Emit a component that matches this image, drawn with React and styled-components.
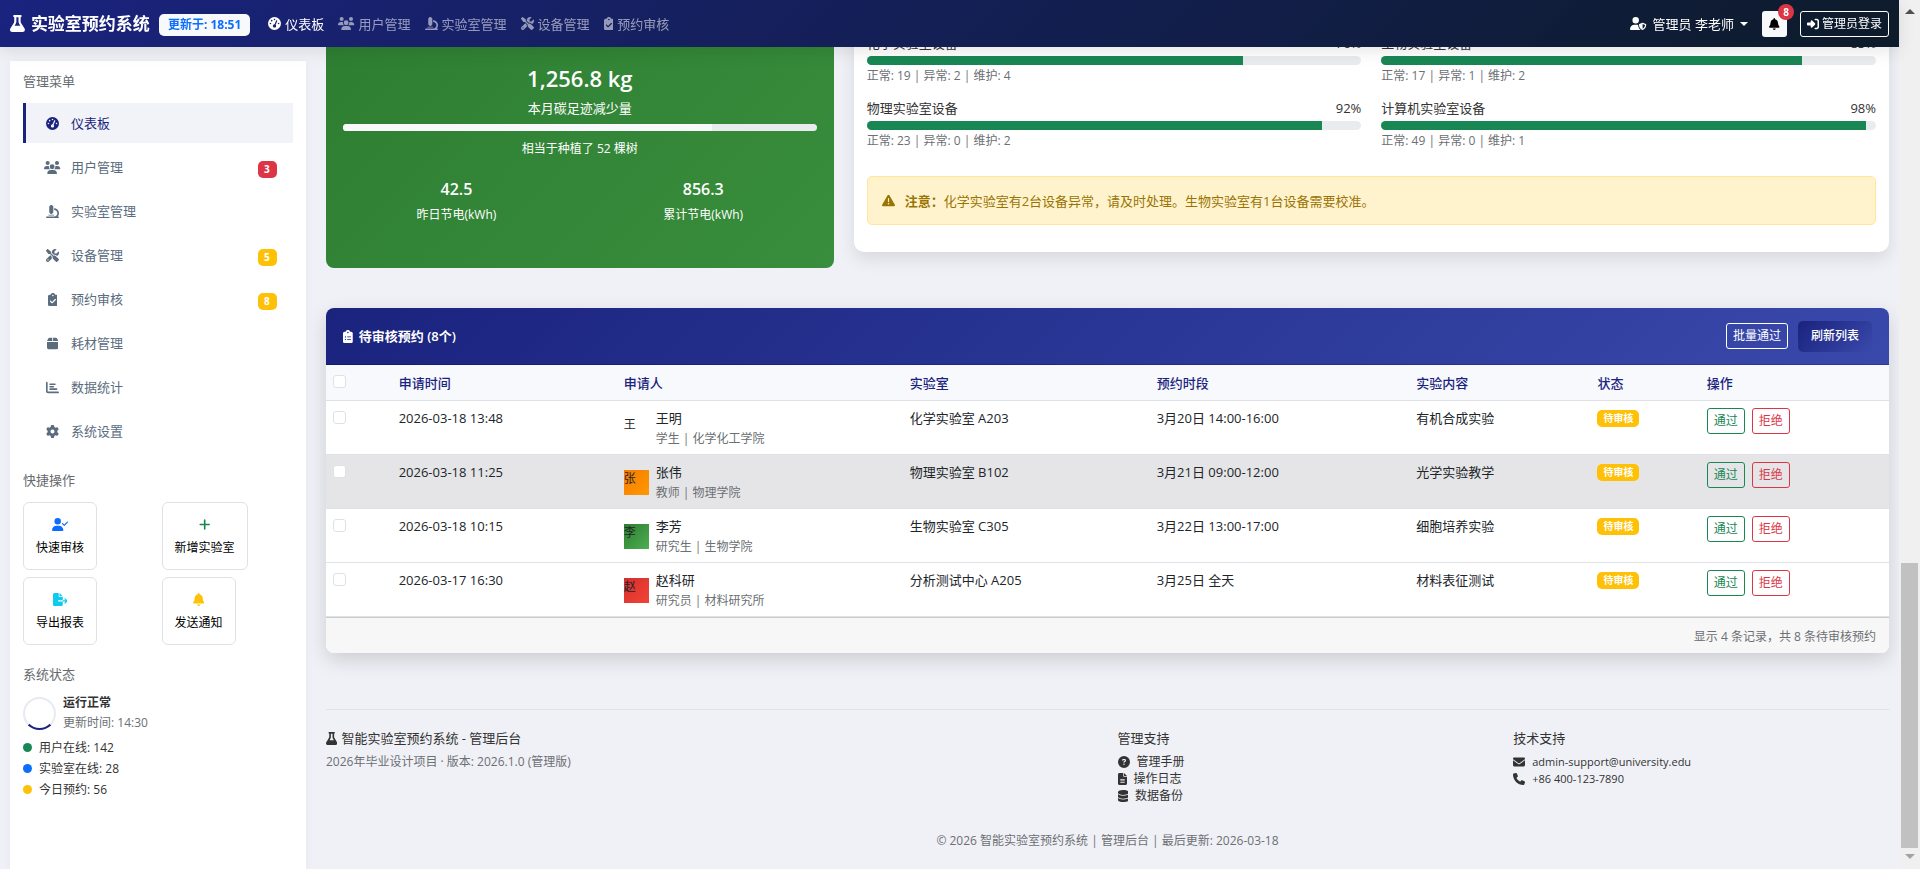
import React from "react";
import styled, { createGlobalStyle, css } from "styled-components";
import {
  FaFlask, FaGaugeHigh, FaUsers, FaMicroscope, FaScrewdriverWrench, FaClipboardCheck,
  FaBox, FaChartBar, FaGear, FaUserCheck, FaPlus, FaFileExport, FaBell,
  FaTriangleExclamation, FaClipboardList, FaUserShield, FaRightToBracket,
  FaCircleQuestion, FaFileLines, FaDatabase, FaEnvelope, FaPhone,
} from "react-icons/fa6";

/* The icons share one height; their width follows the width of each drawing. */
const GlobalStyle = createGlobalStyle`
  html { scrollbar-width: none; }
  *, *::before, *::after { box-sizing: border-box; }
  body {
    margin: 0;
    background: #f0f1f6;
    color: #333;
    font: 13px/20px "Open Sans", "Noto Sans CJK SC", sans-serif;
  }
  h1, h2, h3, p, ul { margin: 0; padding: 0; font-size: inherit; font-weight: inherit; }
  ul { list-style: none; }
  a { color: inherit; text-decoration: none; }
  button { font: inherit; cursor: pointer; margin: 0; }
  svg { width: 1em; height: 1em; flex: none; display: block; }
  svg[viewBox^="0 0 384"] { width: 0.75em; }
  svg[viewBox^="0 0 448"] { width: 0.875em; }
  svg[viewBox^="0 0 576"] { width: 1.125em; }
  svg[viewBox^="0 0 640"] { width: 1.25em; }
`;

const Shell = styled.div`
  display: grid;
  grid-template-columns: minmax(0, 1fr) 21px;
`;

const Columns = styled.div`
  display: grid;
  grid-template-columns: 316px minmax(0, 1fr);
`;

/* ---------- top bar ---------- */

const TopBar = styled.header`
  position: fixed;
  z-index: 10;
  top: 0;
  left: 0;
  right: 21px;
  height: 47px;
  padding: 0 10px;
  display: flex;
  align-items: center;
  background: linear-gradient(135deg, #1a237e 0%, #0d1b2a 100%);
  box-shadow: 0 4px 17px rgba(0, 0, 0, 0.1);
  color: #fff;
`;

const Brand = styled.a`
  display: flex;
  align-items: center;
  gap: 6px;
  margin-right: 9px;
  font-size: 17px;
  font-weight: 700;
`;

const UpdatedTag = styled.span`
  padding: 0 9px;
  margin-top: 2px;
  border-radius: 5px;
  background: #f8f9fa;
  color: #0d6efd;
  font-size: 12px;
  font-weight: 700;
  line-height: 22px;
`;

const TopNav = styled.nav`
  display: flex;
  flex: 1;
  gap: 14px;
  margin-left: 18px;
`;

const TopLink = styled.a`
  display: flex;
  align-items: center;
  gap: 4px;
  color: ${(p) => (p.$active ? "#fff" : "rgba(255, 255, 255, 0.55)")};
`;

const UserMenu = styled.button`
  display: flex;
  align-items: center;
  gap: 6px;
  padding: 0;
  margin-right: 14px;
  border: 0;
  background: none;
  color: #fff;
`;

const Caret = styled.span`
  border: 4px solid transparent;
  border-top-color: currentColor;
  border-bottom: 0;
`;

const BellButton = styled.button`
  position: relative;
  display: grid;
  place-items: center;
  width: 25px;
  height: 26px;
  margin-right: 13px;
  border: 0;
  border-radius: 3px;
  background: #f8f9fa;
  color: #000;
  font-size: 12px;
`;

const BellCount = styled.span`
  position: absolute;
  top: -7px;
  right: -7px;
  width: 16px;
  border-radius: 8px;
  background: #dc3545;
  color: #fff;
  font-size: 10px;
  font-weight: 700;
  line-height: 16px;
  text-align: center;
`;

const SmallButton = styled.button`
  display: inline-flex;
  align-items: center;
  gap: 3px;
  height: 26px;
  padding: 0 6px;
  border: 1px solid ${(p) => p.$color};
  border-radius: 3px;
  background: transparent;
  color: ${(p) => p.$color};
  font-size: 12px;
  line-height: 18px;
`;

/* ---------- sidebar ---------- */

const Sidebar = styled.aside`
  margin: 61px 10px 0;
  padding: 10px 13px;
  min-height: calc(100vh - 61px);
  background: #fff;
  box-shadow: 0 2px 8px rgba(0, 0, 0, 0.05);
`;

const SideTitle = styled.h2`
  color: #666a6e;
  section + section > & { margin-top: 19px; }
`;

const SideMenu = styled.ul`
  display: grid;
  gap: 4px;
  margin-top: 12px;
`;

const SideLink = styled.a`
  display: flex;
  align-items: center;
  height: 40px;
  padding: 0 16px 0 18px;
  border-left: 3px solid transparent;
  color: #5a6c7d;
  ${(p) => p.$active && css`
    border-left-color: #1a237e;
    background: #f1f3f8;
    color: #1a237e;
  `}
`;

const SideIcon = styled.span`
  display: grid;
  place-items: center;
  width: 17px;
  margin-right: 10px;
`;

const Badge = styled.span`
  padding: 0 6px;
  border-radius: 5px;
  background: ${(p) => p.$color};
  color: #fff;
  font-size: 10px;
  font-weight: 700;
  line-height: 17px;
`;

const SideBadge = styled(Badge)`
  min-width: 19px;
  margin: 4px 0 0 auto;
`;

const ActionGrid = styled.div`
  display: grid;
  grid-template-columns: 1fr 1fr;
  justify-items: start;
  gap: 7px;
  margin-top: 12px;
`;

const ActionButton = styled.button`
  display: flex;
  flex-direction: column;
  align-items: center;
  gap: 8px;
  height: 68px;
  padding: 15px 12px 0;
  border: 1px solid #dee2e6;
  border-radius: 6px;
  background: #fff;
  color: #000;
  font-size: 12px;
  line-height: 18px;
  svg { color: ${(p) => p.$color}; font-size: 13px; }
`;

const StatusRow = styled.div`
  display: flex;
  align-items: center;
  gap: 7px;
  margin-top: 9px;
  font-size: 12px;
`;

const Ring = styled.span`
  width: 33px;
  height: 33px;
  border: 2px solid #e8e9f3;
  border-bottom-color: #1a237e;
  border-radius: 50%;
`;

const StatusName = styled.strong`
  display: block;
  font-weight: 600;
`;

const Muted = styled.span`
  color: #6c6f73;
  font-size: 12px;
`;

const StatusList = styled.ul`
  margin-top: 4px;
  font-size: 12px;
  line-height: 21px;
`;

const StatusItem = styled.li`
  display: flex;
  align-items: center;
  gap: 7px;
  &::before {
    content: "";
    width: 9px;
    height: 9px;
    border-radius: 50%;
    background: ${(p) => p.$color};
  }
`;

/* ---------- main column ---------- */

const Main = styled.main`
  padding: 0 10px;
`;

const CardRow = styled.div`
  display: grid;
  grid-template-columns: minmax(0, 1fr) minmax(0, 2fr);
  align-items: start;
  margin: 0 -10px 40px;
  & > * { margin: 0 10px; }
`;

const EnergyCard = styled.section`
  padding: 64px 17px 44px;
  border-radius: 0 0 8px 8px;
  background: linear-gradient(135deg, #2e7d32 0%, #388e3c 100%);
  color: #fff;
  text-align: center;
`;

const BigNumber = styled.h2`
  font-size: 22px;
  font-weight: 600;
  line-height: 28px;
  margin-bottom: 6px;
`;

const Track = styled.div`
  overflow: hidden;
  height: ${(p) => p.$height};
  border-radius: 5px;
  background: #e9ecef;
`;

const Fill = styled.div`
  height: 100%;
  background: ${(p) => p.$color};
`;

const EnergyBar = styled.div`
  margin: 6px 0 9px;
`;

const EnergyNote = styled.p`
  font-size: 12px;
  line-height: 18px;
`;

const EnergyPair = styled.div`
  display: grid;
  grid-template-columns: 1fr 1fr;
  margin: 21px -10px 0;
`;

const EnergyValue = styled.h3`
  font-size: 16px;
  font-weight: 600;
  margin-bottom: 7px;
`;

const EquipmentCard = styled.section`
  padding: 33px 13px 27px;
  border-radius: 0 0 10px 10px;
  background: #fff;
  box-shadow: 0 7px 17px rgba(0, 0, 0, 0.1);
`;

const EquipmentGrid = styled.div`
  display: grid;
  grid-template-columns: 1fr 1fr;
  gap: 13px 20px;
`;

const EquipmentHead = styled.div`
  display: flex;
  justify-content: space-between;
  margin-bottom: 3px;
`;

const EquipmentStats = styled.p`
  margin-top: 2px;
  color: #6c6f73;
  font-size: 12px;
  line-height: 18px;
`;

const Alert = styled.div`
  display: flex;
  align-items: center;
  gap: 10px;
  height: 49px;
  margin-top: 26px;
  padding: 0 14px;
  border: 1px solid #ffe69c;
  border-radius: 5px;
  background: #fff3cd;
  color: #997404;
`;

/* ---------- pending table ---------- */

const TableCard = styled.section`
  border-radius: 8px;
  background: #fff;
  box-shadow: 0 7px 20px rgba(0, 0, 0, 0.15);
  overflow: hidden;
`;

const TableHead = styled.header`
  display: flex;
  align-items: center;
  height: 57px;
  padding: 0 17px;
  background: linear-gradient(135deg, #1a237e 0%, #3949ab 100%);
  border-bottom: 1px solid rgba(0, 0, 0, 0.18);
  color: #fff;
`;

const TableTitle = styled.h2`
  display: flex;
  align-items: center;
  gap: 6px;
  flex: 1;
  font-weight: 600;
`;

const RefreshButton = styled.button`
  height: 31px;
  margin-left: 10px;
  padding: 0 13px;
  border: 0;
  border-radius: 5px;
  background: linear-gradient(135deg, #1a237e 0%, #3949ab 100%);
  color: #fff;
  font-size: 12px;
  font-weight: 500;
`;

const Table = styled.table`
  width: 100%;
  table-layout: fixed;
  border-collapse: separate;
  border-spacing: 0;
  text-align: left;
`;

const Th = styled.th`
  padding: 8px 7px 7px;
  border-bottom: 1px solid #dee2e6;
  background: #f8f9fc;
  color: #1a237e;
  font-weight: 500;
`;

const Td = styled.td`
  padding: 7px 7px 5px;
  border-bottom: 1px solid #dee2e6;
  background: ${(p) => (p.$hover ? "#e5e5e7" : "#fff")};
  color: #212529;
  vertical-align: top;
`;

const Check = styled.input`
  appearance: none;
  display: block;
  width: 13px;
  height: 13px;
  margin: 3px 0 0;
  border: 1px solid #dee2e6;
  border-radius: 3px;
  background: #fff;
  th & { margin: 0 0 3px; }
`;

const Person = styled.div`
  display: flex;
  align-items: center;
  gap: 7px;
`;

const Avatar = styled.span`
  width: 25px;
  height: 25px;
  background: ${(p) => p.$fill};
  font-size: 12px;
  line-height: 17px;
`;

const PersonInfo = styled.div`
  display: grid;
  gap: 1px;
`;

const RowBadge = styled(Badge)`
  display: block;
  width: max-content;
  margin-top: 2px;
`;

const RowActions = styled.div`
  display: flex;
  gap: 7px;
`;

const TableFoot = styled.footer`
  height: 36px;
  padding: 0 13px;
  border-top: 1px solid #ccc;
  background: #f7f7f7;
  color: #6c6f73;
  font-size: 12px;
  line-height: 37px;
  text-align: right;
`;

/* ---------- page footer ---------- */

const PageFooter = styled.footer`
  margin-top: 56px;
  padding: 18px 0 19px;
  border-top: 1px solid #dee2e6;
`;

const FooterColumns = styled.div`
  display: grid;
  grid-template-columns: 2fr 1fr 1fr;
  margin: 0 -10px;
  & > * { padding: 0 10px; }
`;

const FooterTitle = styled.h2`
  display: flex;
  align-items: center;
  gap: 4px;
  margin-bottom: 5px;
`;

const FooterNote = styled(Muted)`
  display: block;
  line-height: 17px;
`;

const FooterLink = styled.a`
  display: flex;
  align-items: center;
  gap: 7px;
  font-size: 12px;
  line-height: 17px;
`;

const ContactText = styled.span`
  font-size: 11px;
`;

const Copyright = styled.p`
  margin-top: 28px;
  color: #6c6f73;
  font-size: 12px;
  line-height: 18px;
  text-align: center;
`;

/* ---------- scroll rail ---------- */

const Rail = styled.div`
  position: sticky;
  top: 0;
  display: flex;
  flex-direction: column;
  align-items: center;
  height: 100vh;
  padding: 9px 0 10px;
  background: #f0f0f0;
`;

const RailArrow = styled.span`
  border: 5px solid transparent;
  ${(p) => (p.$up
    ? "border-top: 0; border-bottom-color: #505050;"
    : "border-bottom: 0; border-top-color: #a3a3a3;")}
`;

const RailTrack = styled.div`
  display: flex;
  align-items: flex-end;
  flex: 1;
  width: 17px;
  margin: 7px 0 6px;
`;

const RailThumb = styled.div`
  width: 100%;
  height: 34.5%;
  background: #c1c1c1;
`;

const topLinks = [
  [FaGaugeHigh, "仪表板"],
  [FaUsers, "用户管理"],
  [FaMicroscope, "实验室管理"],
  [FaScrewdriverWrench, "设备管理"],
  [FaClipboardCheck, "预约审核"],
];

const sideLinks = [
  [FaGaugeHigh, "仪表板"],
  [FaUsers, "用户管理", "3", "#dc3545"],
  [FaMicroscope, "实验室管理"],
  [FaScrewdriverWrench, "设备管理", "5", "#ffc107"],
  [FaClipboardCheck, "预约审核", "8", "#ffc107"],
  [FaBox, "耗材管理"],
  [FaChartBar, "数据统计"],
  [FaGear, "系统设置"],
];

const actions = [
  [FaUserCheck, "快速审核", "#0d6efd"],
  [FaPlus, "新增实验室", "#198754"],
  [FaFileExport, "导出报表", "#0dcaf0"],
  [FaBell, "发送通知", "#ffc107"],
];

const equipment = [
  ["化学实验室设备", 76, "正常: 19 | 异常: 2 | 维护: 4"],
  ["生物实验室设备", 85, "正常: 17 | 异常: 1 | 维护: 2"],
  ["物理实验室设备", 92, "正常: 23 | 异常: 0 | 维护: 2"],
  ["计算机实验室设备", 98, "正常: 49 | 异常: 0 | 维护: 1"],
];

const columnWidths = ["4.2%", "14.4%", "18.3%", "15.8%", "16.6%", "11.6%", "7%", "12.1%"];
const headings = ["申请时间", "申请人", "实验室", "预约时段", "实验内容", "状态", "操作"];

const bookings = [
  { time: "2026-03-18 13:48", mark: "王", fill: "none", name: "王明", role: "学生 | 化学化工学院", lab: "化学实验室 A203", slot: "3月20日 14:00-16:00", topic: "有机合成实验" },
  { time: "2026-03-18 11:25", mark: "张", fill: "linear-gradient(135deg, #f57c00, #ff9800)", name: "张伟", role: "教师 | 物理学院", lab: "物理实验室 B102", slot: "3月21日 09:00-12:00", topic: "光学实验教学", hover: true },
  { time: "2026-03-18 10:15", mark: "李", fill: "linear-gradient(135deg, #2e7d32, #4caf50)", name: "李芳", role: "研究生 | 生物学院", lab: "生物实验室 C305", slot: "3月22日 13:00-17:00", topic: "细胞培养实验" },
  { time: "2026-03-17 16:30", mark: "赵", fill: "linear-gradient(135deg, #d32f2f, #f44336)", name: "赵科研", role: "研究员 | 材料研究所", lab: "分析测试中心 A205", slot: "3月25日 全天", topic: "材料表征测试" },
];

function Header() {
  return (
    <TopBar>
      <Brand href="#"><FaFlask />实验室预约系统</Brand>
      <UpdatedTag>更新于: 18:51</UpdatedTag>
      <TopNav>
        {topLinks.map(([Icon, label], i) => (
          <TopLink key={label} href="#" $active={i === 0}><Icon />{label}</TopLink>
        ))}
      </TopNav>
      <UserMenu type="button"><FaUserShield />管理员 李老师<Caret /></UserMenu>
      <BellButton type="button" aria-label="通知"><FaBell /><BellCount>8</BellCount></BellButton>
      <SmallButton type="button" $color="#fff"><FaRightToBracket />管理员登录</SmallButton>
    </TopBar>
  );
}

function SidePanel() {
  return (
    <Sidebar>
      <section>
        <SideTitle>管理菜单</SideTitle>
        <SideMenu>
          {sideLinks.map(([Icon, label, count, color], i) => (
            <li key={label}>
              <SideLink href="#" $active={i === 0}>
                <SideIcon><Icon /></SideIcon>
                {label}
                {count && <SideBadge $color={color}>{count}</SideBadge>}
              </SideLink>
            </li>
          ))}
        </SideMenu>
      </section>
      <section>
        <SideTitle>快捷操作</SideTitle>
        <ActionGrid>
          {actions.map(([Icon, label, color]) => (
            <ActionButton key={label} type="button" $color={color}><Icon />{label}</ActionButton>
          ))}
        </ActionGrid>
      </section>
      <section>
        <SideTitle>系统状态</SideTitle>
        <StatusRow>
          <Ring />
          <div>
            <StatusName>运行正常</StatusName>
            <Muted>更新时间: 14:30</Muted>
          </div>
        </StatusRow>
        <StatusList>
          <StatusItem $color="#198754">用户在线: 142</StatusItem>
          <StatusItem $color="#0d6efd">实验室在线: 28</StatusItem>
          <StatusItem $color="#ffc107">今日预约: 56</StatusItem>
        </StatusList>
      </section>
    </Sidebar>
  );
}

function Overview() {
  return (
    <CardRow>
      <EnergyCard>
        <BigNumber>1,256.8 kg</BigNumber>
        <p>本月碳足迹减少量</p>
        <EnergyBar>
          <Track $height="7px"><Fill $color="#f8f9fa" style={{ width: "78%" }} /></Track>
        </EnergyBar>
        <EnergyNote>相当于种植了 52 棵树</EnergyNote>
        <EnergyPair>
          <div><EnergyValue>42.5</EnergyValue><EnergyNote>昨日节电(kWh)</EnergyNote></div>
          <div><EnergyValue>856.3</EnergyValue><EnergyNote>累计节电(kWh)</EnergyNote></div>
        </EnergyPair>
      </EnergyCard>
      <EquipmentCard>
        <EquipmentGrid>
          {equipment.map(([name, percent, stats]) => (
            <div key={name}>
              <EquipmentHead><span>{name}</span><span>{percent}%</span></EquipmentHead>
              <Track $height="9px"><Fill $color="#198754" style={{ width: `${percent}%` }} /></Track>
              <EquipmentStats>{stats}</EquipmentStats>
            </div>
          ))}
        </EquipmentGrid>
        <Alert role="alert">
          <FaTriangleExclamation />
          <span><strong>注意：</strong>化学实验室有2台设备异常，请及时处理。生物实验室有1台设备需要校准。</span>
        </Alert>
      </EquipmentCard>
    </CardRow>
  );
}

function PendingTable() {
  return (
    <TableCard>
      <TableHead>
        <TableTitle><FaClipboardList />待审核预约 (8个)</TableTitle>
        <SmallButton type="button" $color="#fff">批量通过</SmallButton>
        <RefreshButton type="button">刷新列表</RefreshButton>
      </TableHead>
      <Table>
        <colgroup>
          {columnWidths.map((w, i) => <col key={i} width={w} />)}
        </colgroup>
        <thead>
          <tr>
            <Th><Check type="checkbox" aria-label="全选" /></Th>
            {headings.map((h) => <Th key={h}>{h}</Th>)}
          </tr>
        </thead>
        <tbody>
          {bookings.map((b) => (
            <tr key={b.name}>
              <Td $hover={b.hover}><Check type="checkbox" aria-label={b.name} /></Td>
              <Td $hover={b.hover}>{b.time}</Td>
              <Td $hover={b.hover}>
                <Person>
                  <Avatar $fill={b.fill}>{b.mark}</Avatar>
                  <PersonInfo><span>{b.name}</span><Muted>{b.role}</Muted></PersonInfo>
                </Person>
              </Td>
              <Td $hover={b.hover}>{b.lab}</Td>
              <Td $hover={b.hover}>{b.slot}</Td>
              <Td $hover={b.hover}>{b.topic}</Td>
              <Td $hover={b.hover}><RowBadge $color="#ffc107">待审核</RowBadge></Td>
              <Td $hover={b.hover}>
                <RowActions>
                  <SmallButton type="button" $color="#198754">通过</SmallButton>
                  <SmallButton type="button" $color="#dc3545">拒绝</SmallButton>
                </RowActions>
              </Td>
            </tr>
          ))}
        </tbody>
      </Table>
      <TableFoot>显示 4 条记录，共 8 条待审核预约</TableFoot>
    </TableCard>
  );
}

function Footer() {
  return (
    <PageFooter>
      <FooterColumns>
        <div>
          <FooterTitle><FaFlask />智能实验室预约系统 - 管理后台</FooterTitle>
          <FooterNote>2026年毕业设计项目 · 版本: 2026.1.0 (管理版)</FooterNote>
        </div>
        <div>
          <FooterTitle>管理支持</FooterTitle>
          <FooterLink href="#"><FaCircleQuestion />管理手册</FooterLink>
          <FooterLink href="#"><FaFileLines />操作日志</FooterLink>
          <FooterLink href="#"><FaDatabase />数据备份</FooterLink>
        </div>
        <div>
          <FooterTitle>技术支持</FooterTitle>
          <FooterLink href="mailto:admin-support@university.edu">
            <FaEnvelope /><ContactText>admin-support@university.edu</ContactText>
          </FooterLink>
          <FooterLink href="tel:+864001237890">
            <FaPhone /><ContactText>+86 400-123-7890</ContactText>
          </FooterLink>
        </div>
      </FooterColumns>
      <Copyright>© 2026 智能实验室预约系统 | 管理后台 | 最后更新: 2026-03-18</Copyright>
    </PageFooter>
  );
}

export default function App() {
  return (
    <>
      <GlobalStyle />
      <Header />
      <Shell>
        <Columns>
          <SidePanel />
          <Main>
            <Overview />
            <PendingTable />
            <Footer />
          </Main>
        </Columns>
        <Rail aria-hidden="true">
          <RailArrow $up />
          <RailTrack><RailThumb /></RailTrack>
          <RailArrow />
        </Rail>
      </Shell>
    </>
  );
}
